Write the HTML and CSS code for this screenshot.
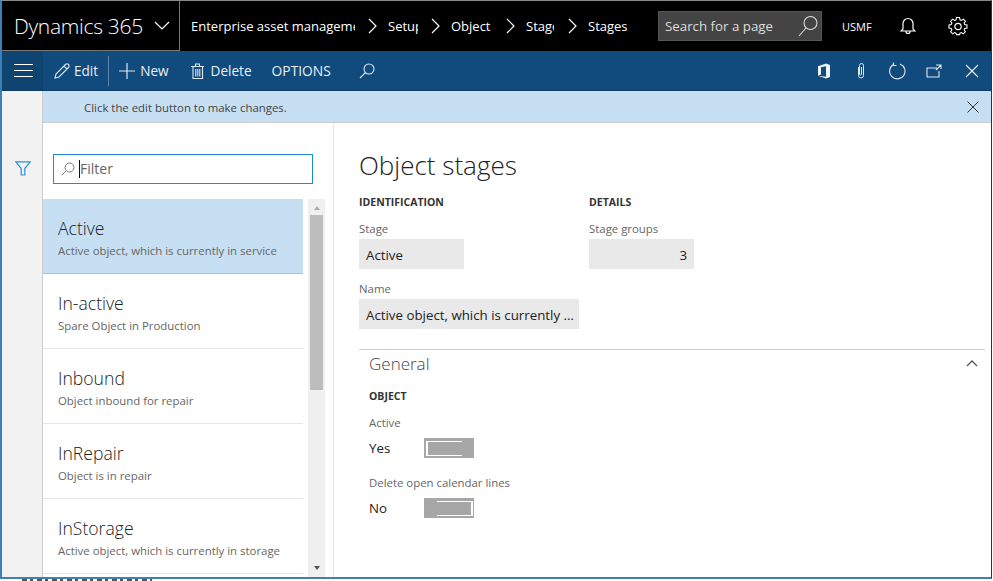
FILE: index.html
```html
<!DOCTYPE html>
<html lang="en">
<head>
<meta charset="utf-8">
<title>Object stages</title>
<link rel="stylesheet" href="styles.css">
</head>
<body>
<div class="window">
  <header class="topbar">
    <div class="brand"><span class="brand-name">Dynamics 365</span>
      <svg class="brand-caret" width="16" height="10" viewBox="0 0 16 10"><path d="M1 1l7 7 7-7" fill="none" stroke="#fff" stroke-width="1.2"/></svg>
    </div>
    <nav class="crumbs">
      <span class="crumb c1">Enterprise asset management</span>
      <svg class="sep" width="10" height="16" viewBox="0 0 10 16"><path d="M1 1l7 7-7 7" fill="none" stroke="#fff" stroke-width="1.2"/></svg>
      <span class="crumb c2">Setup</span>
      <svg class="sep" width="10" height="16" viewBox="0 0 10 16"><path d="M1 1l7 7-7 7" fill="none" stroke="#fff" stroke-width="1.2"/></svg>
      <span class="crumb c3">Objects</span>
      <svg class="sep" width="10" height="16" viewBox="0 0 10 16"><path d="M1 1l7 7-7 7" fill="none" stroke="#fff" stroke-width="1.2"/></svg>
      <span class="crumb c4">Stages</span>
      <svg class="sep" width="10" height="16" viewBox="0 0 10 16"><path d="M1 1l7 7-7 7" fill="none" stroke="#fff" stroke-width="1.2"/></svg>
      <span class="crumb">Stages</span>
    </nav>
    <div class="pagesearch"><span>Search for a page</span>
      <svg width="20" height="24" viewBox="0 0 20 24"><circle cx="12.5" cy="9" r="6.5" fill="none" stroke="#ddd" stroke-width="1.1"/><path d="M8 14L1 22" stroke="#ddd" stroke-width="1.1"/></svg>
    </div>
    <span class="company">USMF</span>
    <svg class="bell" width="16" height="20" viewBox="0 0 16 20"><path d="M3 13V7.500a5 5 0 0 1 10 0V13l2 2H1z M6 15.500a2 2 0 0 0 4 0" fill="none" stroke="#fff" stroke-width="1.2"/></svg>
    <svg class="gear" width="20" height="20" viewBox="0 0 20 20"><path d="M8.300 1h3.400l.5 2.500 1.600.7 2.200-1.400 2.200 2.300-1.400 2.100.7 1.700 2.500.5v3.200l-2.500.5-.7 1.700 1.400 2.100-2.200 2.300-2.200-1.400-1.600.7-.5 1.500H8.300l-.5-1.500-1.600-.7L4 19.200 1.800 16.900l1.400-2.100-.7-1.700L0 12.600V9.400l2.500-.5.7-1.700L1.800 5.100 4 2.800l2.200 1.400 1.600-.7z" transform="translate(1 .6) scale(.9)" fill="none" stroke="#fff" stroke-width="1.2"/><circle cx="10" cy="10.500" r="3.200" fill="none" stroke="#fff" stroke-width="1.2"/></svg>
  </header>

  <div class="actionbar">
    <button class="hamburger" aria-label="Menu"><i></i><i></i><i></i></button>
    <div class="action edit">
      <svg width="16" height="16" viewBox="0 0 16 16"><path d="M1 15l1-4L11.500 1.500a1.800 1.800 0 0 1 3 3L5 14z M10 3l3 3" fill="none" stroke="#dfe8f0" stroke-width="1.1"/></svg>
      <span>Edit</span>
    </div>
    <div class="action new">
      <svg width="16" height="16" viewBox="0 0 16 16"><path d="M8 0v16M0 8h16" stroke="#dfe8f0" stroke-width="1.2"/></svg>
      <span>New</span>
    </div>
    <div class="action delete">
      <svg width="13" height="16" viewBox="0 0 13 16"><path d="M2 3.500h9.500V15.500H2z M0 3.500h13 M4.500 3.500V1h4v2.500 M4.800 6v7.500M6.800 6v7.500M8.800 6v7.500" fill="none" stroke="#dfe8f0" stroke-width="1.1"/></svg>
      <span>Delete</span>
    </div>
    <div class="action options"><span>OPTIONS</span></div>
    <svg class="action-search" width="16" height="16" viewBox="0 0 16 16"><circle cx="10" cy="6" r="5" fill="none" stroke="#dfe8f0" stroke-width="1.1"/><path d="M6.500 9.500L1 15" stroke="#dfe8f0" stroke-width="1.1"/></svg>
    <div class="action-right">
      <svg class="ic-office" width="14" height="16" viewBox="0 0 14 16"><path d="M1 3.200L9 .5l4 1.500v12l-4 1.500-8-2.700 8 1V3.200L4 4.200v7.200L1 12.800z" fill="#eef3f7"/></svg>
      <svg class="ic-clip" width="10" height="18" viewBox="0 0 10 18"><path d="M2.500 5v8.500a2.500 2.500 0 0 0 5 0V3.500a2 2 0 0 0-4 0V12a1 1 0 0 0 2 0V5" fill="none" stroke="#dfe8f0" stroke-width="1"/></svg>
      <svg class="ic-refresh" width="18" height="18" viewBox="0 0 18 18"><path d="M5.500 2.500A7.700 7.700 0 1 0 12 2M5.500 .5v3h3" fill="none" stroke="#dfe8f0" stroke-width="1.1"/></svg>
      <svg class="ic-popout" width="16" height="14" viewBox="0 0 16 14"><path d="M11 4H1v9h12V7 M10 1h5v4 M15 1l-5 5" fill="none" stroke="#dfe8f0" stroke-width="1.1"/></svg>
      <svg width="14" height="14" viewBox="0 0 14 14"><path d="M1 1l12 12M13 1L1 13" stroke="#eef3f7" stroke-width="1.1"/></svg>
    </div>
  </div>

  <div class="main">
    <aside class="rail">
      <svg class="funnel" width="16" height="15" viewBox="0 0 16 15"><path d="M.8.800h14.400L9.800 7.500v6.500H6.200V7.500z" fill="none" stroke="#2b8fe0" stroke-width="1.2"/></svg>
    </aside>
    <div class="content">
      <div class="message">
        <span>Click the edit button to make changes.</span>
        <svg width="12" height="12" viewBox="0 0 12 12"><path d="M.5.500l11 11M11.500.500l-11 11" stroke="#333" stroke-width="1"/></svg>
      </div>
      <div class="panes">
        <section class="listpane">
          <div class="filter">
            <svg width="14" height="14" viewBox="0 0 14 14"><circle cx="8.500" cy="5.500" r="4.500" fill="none" stroke="#777" stroke-width="1"/><path d="M5.200 8.800L.8 13.200" stroke="#777" stroke-width="1"/></svg>
            <span class="caret"></span><span class="filter-text">Filter</span>
          </div>
          <div class="listwrap">
            <ul class="list">
              <li class="row selected"><strong>Active</strong><small>Active object, which is currently in service</small></li>
              <li class="row"><strong>In-active</strong><small>Spare Object in Production</small></li>
              <li class="row"><strong>Inbound</strong><small>Object inbound for repair</small></li>
              <li class="row"><strong>InRepair</strong><small>Object is in repair</small></li>
              <li class="row"><strong>InStorage</strong><small>Active object, which is currently in storage</small></li>
            </ul>
            <div class="scrollbar">
              <span class="arrow up"></span>
              <span class="thumb"></span>
              <span class="arrow down"></span>
            </div>
          </div>
        </section>
        <section class="detail">
          <h1>Object stages</h1>
          <div class="groups">
            <div class="group">
              <h2>IDENTIFICATION</h2>
              <label>Stage</label>
              <div class="field short">Active</div>
              <label>Name</label>
              <div class="field long">Active object, which is currently …</div>
            </div>
            <div class="group">
              <h2>DETAILS</h2>
              <label>Stage groups</label>
              <div class="field short num">3</div>
            </div>
          </div>
          <div class="fasttab">
            <div class="fasttab-head"><span>General</span>
              <svg width="12" height="7" viewBox="0 0 12 7"><path d="M1 6l5-5 5 5" fill="none" stroke="#555" stroke-width="1.3"/></svg>
            </div>
            <h2>OBJECT</h2>
            <label>Active</label>
            <div class="toggle-row"><span>Yes</span><div class="toggle on"><i></i></div></div>
            <label>Delete open calendar lines</label>
            <div class="toggle-row"><span>No</span><div class="toggle off"><i></i></div></div>
          </div>
        </section>
      </div>
    </div>
  </div>
</div>
<div class="peek"></div>
</body>
</html>
```
FILE: styles.css
```css
* { box-sizing: border-box; }
html, body { margin: 0; padding: 0; }
body { width: 993px; height: 581px; overflow: hidden; background: #fff; font-family: "Open Sans", "Noto Sans", sans-serif; color: #222; }
.window { height: 579px; width: 992px; display: flex; flex-direction: column; border-left: 2px solid #3f7fb5; border-bottom: 2px solid #3f7fb5; border-right: 1px solid #333; border-top: 1px solid #888; overflow: hidden; }
.peek { height: 2px; width: 130px; margin-left: 22px; background: repeating-linear-gradient(90deg, #555 0 5px, transparent 5px 8px, #555 8px 11px, transparent 11px 15px); }
.topbar { height: 50px; background: #000; display: flex; align-items: center; color: #fff; flex: none; }
.brand { width: 178px; height: 50px; display: flex; align-items: center; border-right: 1px solid #777; border-bottom: 1px solid #777; padding-left: 12px; flex: none; }
.brand-name { font-size: 21px; font-weight: 300; letter-spacing: -.3px; }
.brand-caret { margin-left: 11px; }
.crumbs { display: flex; align-items: center; width: 478px; padding-left: 11px; font-size: 13px; flex: none; }
.crumb { white-space: nowrap; overflow: hidden; }
.c1 { width: 164px; }
.c2 { width: 30px; }
.c3 { width: 40px; margin-right: 2px; }
.c4 { width: 28px; margin-right: 1px; }
.sep { margin: 0 10px 0 13px; flex: none; }
.pagesearch { width: 164px; height: 30px; background: #444; border: 1px solid #555; display: flex; align-items: center; justify-content: space-between; padding: 0 3px 0 6px; font-size: 13.3px; color: #ddd; flex: none; }
.company { font-size: 11px; margin-left: 20px; }
.bell { margin-left: 28px; }
.gear { margin-left: 32px; }
.actionbar { height: 40px; background: #114b7d; border-bottom: 1px solid #0d3d66; display: flex; align-items: center; color: #e8eef3; flex: none; font-size: 13.6px; }
.hamburger { width: 41px; height: 39px; background: #0f4470; border: 0; padding: 0 0 0 2px; display: flex; flex-direction: column; align-items: center; justify-content: center; gap: 5px; flex: none; }
.hamburger i { width: 19px; height: 1px; background: #fff; }
.action { display: flex; align-items: center; gap: 4px; }
.edit { padding: 0 10px 0 11px; border-right: 1px solid #5f86a8; height: 30px; }
.new { margin-left: 10px; gap: 5px; }
.delete { margin-left: 22px; gap: 7px; }
.options { margin-left: 20px; font-size: 13.8px; }
.action-search { margin-left: 28px; }
.action-right { margin-left: auto; display: flex; align-items: center; padding-right: 12px; }
.ic-office { margin-right: 25px; }
.ic-clip { margin-right: 22px; }
.ic-refresh { margin-right: 20px; }
.ic-popout { margin-right: 23px; }
.main { flex: 1; display: flex; min-height: 0; }
.rail { width: 41px; background: #f2f2f2; border-right: 1px solid #ccc; flex: none; padding: 70px 0 0 13px; }
.funnel { display: block; }
.content { flex: 1; display: flex; flex-direction: column; min-width: 0; }
.message { height: 32px; background: #c6dff3; border-bottom: 1px solid #ccc; display: flex; align-items: center; justify-content: space-between; padding: 1px 12px 0 41px; font-size: 11.4px; color: #444; flex: none; }
.panes { flex: 1; display: flex; min-height: 0; }
.listpane { width: 291px; border-right: 1px solid #e6e6e6; flex: none; display: flex; flex-direction: column; }
.filter { margin: 31px 20px 0 10px; height: 30px; border: 1px solid #1f8ae0; display: flex; align-items: center; padding-left: 7px; font-size: 14px; color: #666; flex: none; }
.filter-text { padding-bottom: 2px; }
.caret { width: 1px; height: 18px; background: #111; margin-left: 4px; }
.listwrap { margin-top: 15px; flex: 1; display: flex; min-height: 0; }
.list { list-style: none; margin: 0; padding: 0; width: 260px; flex: none; }
.row { height: 75px; padding: 17px 0 0 15px; border-bottom: 1px solid #e6e6e6; display: flex; flex-direction: column; }
.row.selected { background: #c6dff3; border-bottom-color: #bbb; }
.row strong { font-size: 17.6px; font-weight: 300; color: #222; line-height: 25px; }
.row small { font-size: 11.4px; color: #666; line-height: 16px; margin-top: 2px; white-space: nowrap; }
.scrollbar { margin-left: 5px; width: 17px; background: #f0f0f0; display: flex; flex-direction: column; align-items: center; height: 378px; }
.thumb { width: 13px; height: 175px; background: #bdbdbd; margin-top: 5px; }
.arrow { width: 0; height: 0; border-left: 3.5px solid transparent; border-right: 3.5px solid transparent; }
.arrow.up { border-bottom: 4px solid #aaa; margin-top: 7px; }
.arrow.down { border-top: 4px solid #555; margin-top: auto; margin-bottom: 7px; }
.detail { flex: 1; padding: 24px 6px 0 25px; min-width: 0; }
h1 { margin: 0; font-size: 26px; font-weight: 300; color: #222; line-height: 36px; }
h2 { margin: 0; font-size: 10.5px; font-weight: 700; color: #333; line-height: 14px; }
.groups { display: flex; margin-top: 12px; }
.group { width: 230px; }
label { display: block; font-size: 11.4px; color: #666; line-height: 16px; }
.group label { margin-top: 12px; }
.group .field + label { margin-top: 12px; }
.field { height: 30px; background: #e9e9e9; display: flex; align-items: center; padding: 1px 7px 0; font-size: 13.3px; color: #222; margin-top: 2px; white-space: nowrap; }
.short { width: 105px; }
.long { width: 220px; }
.num { justify-content: flex-end; }
.fasttab { border-top: 1px solid #ccc; margin-top: 20px; padding-left: 10px; }
.fasttab-head { display: flex; align-items: center; justify-content: space-between; height: 27px; padding-right: 7px; font-size: 17px; font-weight: 300; color: #444; }
.fasttab h2 { margin-top: 12px; }
.fasttab label { margin-top: 12px; }
.fasttab label + .toggle-row { margin-top: 7px; }
.fasttab .toggle-row + label { margin-top: 17px; }
.toggle-row { display: flex; align-items: center; height: 20px; font-size: 13.3px; color: #222; }
.toggle-row span { width: 55px; }
.toggle { width: 50px; height: 20px; background: #a6a6a6; position: relative; }
.toggle i { position: absolute; top: 3px; height: 15px; border: 1px solid #fff; width: 36px; }
.toggle.on i { left: 2px; border-right: 0; border-left-width: 2px; }
.toggle.off i { right: 1px; border-left: 0; border-right-width: 2px; }
```
